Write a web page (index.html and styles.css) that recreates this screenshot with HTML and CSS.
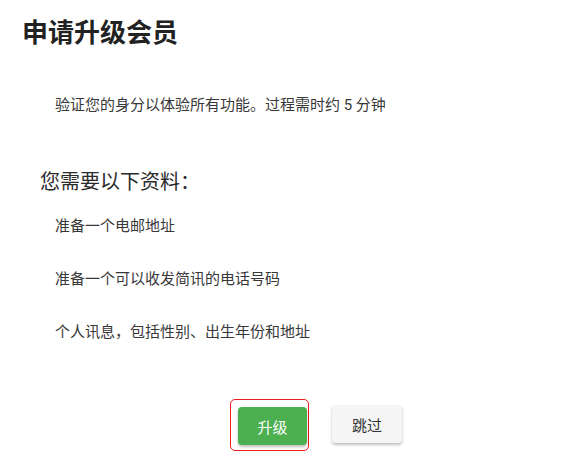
FILE: index.html
```html
<!DOCTYPE html>
<html lang="zh-CN">
<head>
<meta charset="utf-8">
<link rel="stylesheet" href="styles.css">
</head>
<body>
<div class="page">
  <h1 class="title">申请升级会员</h1>
  <p class="intro">验证您的身分以体验所有功能。过程需时约 5 分钟</p>
  <h2 class="subtitle">您需要以下资料<span class="colon">：</span></h2>
  <ul class="reqs">
    <li>准备一个电邮地址</li>
    <li>准备一个可以收发简讯的电话号码</li>
    <li>个人讯息，包括性别、出生年份和地址</li>
  </ul>
  <div class="actions">
    <div class="focus-ring"><button class="btn btn-primary">升级</button></div>
    <button class="btn btn-secondary">跳过</button>
  </div>
</div>
</body>
</html>
```

FILE: styles.css
```css
html, body {
  margin: 0;
  padding: 0;
  background: #ffffff;
}
body {
  font-family: Roboto, "Noto Sans CJK SC", sans-serif;
  color: #383838;
}
.page {
  padding: 14px 0 0 22px;
}
.title {
  margin: 0;
  font-size: 26px;
  line-height: 34px;
  font-weight: 700;
  color: #222222;
  font-family: "Noto Sans CJK SC", sans-serif;
}
.intro {
  margin: 47px 0 0 33px;
  font-size: 15px;
  line-height: 20px;
}
.subtitle {
  margin: 52px 0 0 18px;
  font-size: 20px;
  line-height: 28px;
  font-weight: 400;
  color: #2a2a2a;
}
.colon {
  font-family: "Noto Sans CJK JP", sans-serif;
}
.reqs {
  list-style: none;
  margin: 20px 0 0 33px;
  padding: 0;
  display: flex;
  flex-direction: column;
  gap: 33px;
  font-size: 15px;
  line-height: 20px;
}
.actions {
  margin: 57px 0 0 208px;
  display: flex;
  align-items: flex-start;
  gap: 23px;
}
.focus-ring {
  border: 1px solid #ee1c1c;
  border-radius: 5px;
  padding: 7px 1px 5px 7px;
}
.btn {
  font-family: Roboto, "Noto Sans CJK SC", sans-serif;
  font-size: 15px;
  border: none;
  border-radius: 4px;
  height: 38px;
  padding: 0;
  cursor: pointer;
  box-shadow: 0 2px 3px rgba(0,0,0,0.25);
}
.btn-primary {
  width: 69px;
  background: #4caf50;
  color: #ffffff;
}
.btn-secondary {
  margin-top: 6px;
  width: 70px;
  background: #f5f5f5;
  color: #333333;
}
```
